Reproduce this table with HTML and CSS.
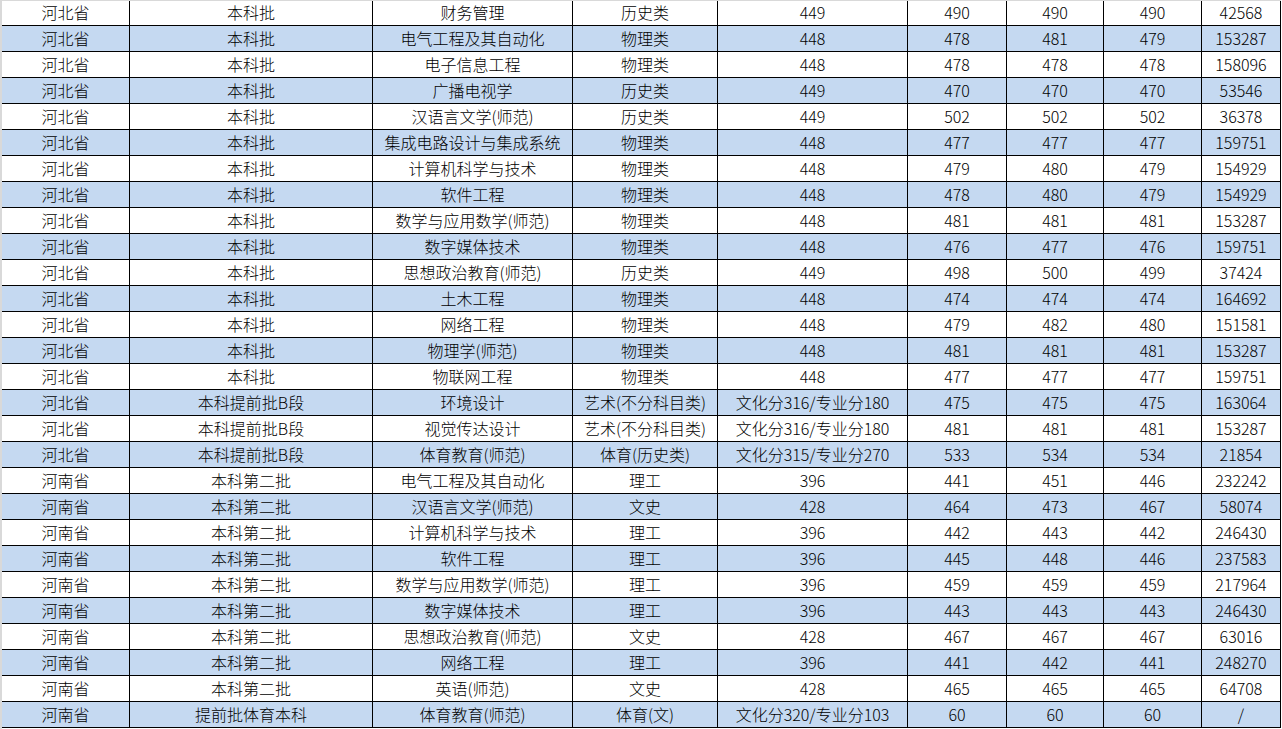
FILE: index.html
```html
<!DOCTYPE html>
<html lang="zh-CN">
<head>
<meta charset="utf-8">
<title>录取分数</title>
<link rel="stylesheet" href="styles.css">
</head>
<body>
<div class="sheet">
<div class="row first"><div class="c">河北省</div><div class="c">本科批</div><div class="c">财务管理</div><div class="c">历史类</div><div class="c">449</div><div class="c">490</div><div class="c">490</div><div class="c">490</div><div class="c">42568</div></div>
<div class="row alt"><div class="c">河北省</div><div class="c">本科批</div><div class="c">电气工程及其自动化</div><div class="c">物理类</div><div class="c">448</div><div class="c">478</div><div class="c">481</div><div class="c">479</div><div class="c">153287</div></div>
<div class="row"><div class="c">河北省</div><div class="c">本科批</div><div class="c">电子信息工程</div><div class="c">物理类</div><div class="c">448</div><div class="c">478</div><div class="c">478</div><div class="c">478</div><div class="c">158096</div></div>
<div class="row alt"><div class="c">河北省</div><div class="c">本科批</div><div class="c">广播电视学</div><div class="c">历史类</div><div class="c">449</div><div class="c">470</div><div class="c">470</div><div class="c">470</div><div class="c">53546</div></div>
<div class="row"><div class="c">河北省</div><div class="c">本科批</div><div class="c">汉语言文学(师范)</div><div class="c">历史类</div><div class="c">449</div><div class="c">502</div><div class="c">502</div><div class="c">502</div><div class="c">36378</div></div>
<div class="row alt"><div class="c">河北省</div><div class="c">本科批</div><div class="c">集成电路设计与集成系统</div><div class="c">物理类</div><div class="c">448</div><div class="c">477</div><div class="c">477</div><div class="c">477</div><div class="c">159751</div></div>
<div class="row"><div class="c">河北省</div><div class="c">本科批</div><div class="c">计算机科学与技术</div><div class="c">物理类</div><div class="c">448</div><div class="c">479</div><div class="c">480</div><div class="c">479</div><div class="c">154929</div></div>
<div class="row alt"><div class="c">河北省</div><div class="c">本科批</div><div class="c">软件工程</div><div class="c">物理类</div><div class="c">448</div><div class="c">478</div><div class="c">480</div><div class="c">479</div><div class="c">154929</div></div>
<div class="row"><div class="c">河北省</div><div class="c">本科批</div><div class="c">数学与应用数学(师范)</div><div class="c">物理类</div><div class="c">448</div><div class="c">481</div><div class="c">481</div><div class="c">481</div><div class="c">153287</div></div>
<div class="row alt"><div class="c">河北省</div><div class="c">本科批</div><div class="c">数字媒体技术</div><div class="c">物理类</div><div class="c">448</div><div class="c">476</div><div class="c">477</div><div class="c">476</div><div class="c">159751</div></div>
<div class="row"><div class="c">河北省</div><div class="c">本科批</div><div class="c">思想政治教育(师范)</div><div class="c">历史类</div><div class="c">449</div><div class="c">498</div><div class="c">500</div><div class="c">499</div><div class="c">37424</div></div>
<div class="row alt"><div class="c">河北省</div><div class="c">本科批</div><div class="c">土木工程</div><div class="c">物理类</div><div class="c">448</div><div class="c">474</div><div class="c">474</div><div class="c">474</div><div class="c">164692</div></div>
<div class="row"><div class="c">河北省</div><div class="c">本科批</div><div class="c">网络工程</div><div class="c">物理类</div><div class="c">448</div><div class="c">479</div><div class="c">482</div><div class="c">480</div><div class="c">151581</div></div>
<div class="row alt"><div class="c">河北省</div><div class="c">本科批</div><div class="c">物理学(师范)</div><div class="c">物理类</div><div class="c">448</div><div class="c">481</div><div class="c">481</div><div class="c">481</div><div class="c">153287</div></div>
<div class="row"><div class="c">河北省</div><div class="c">本科批</div><div class="c">物联网工程</div><div class="c">物理类</div><div class="c">448</div><div class="c">477</div><div class="c">477</div><div class="c">477</div><div class="c">159751</div></div>
<div class="row alt"><div class="c">河北省</div><div class="c">本科提前批B段</div><div class="c">环境设计</div><div class="c">艺术(不分科目类)</div><div class="c">文化分316/专业分180</div><div class="c">475</div><div class="c">475</div><div class="c">475</div><div class="c">163064</div></div>
<div class="row"><div class="c">河北省</div><div class="c">本科提前批B段</div><div class="c">视觉传达设计</div><div class="c">艺术(不分科目类)</div><div class="c">文化分316/专业分180</div><div class="c">481</div><div class="c">481</div><div class="c">481</div><div class="c">153287</div></div>
<div class="row alt"><div class="c">河北省</div><div class="c">本科提前批B段</div><div class="c">体育教育(师范)</div><div class="c">体育(历史类)</div><div class="c">文化分315/专业分270</div><div class="c">533</div><div class="c">534</div><div class="c">534</div><div class="c">21854</div></div>
<div class="row"><div class="c">河南省</div><div class="c">本科第二批</div><div class="c">电气工程及其自动化</div><div class="c">理工</div><div class="c">396</div><div class="c">441</div><div class="c">451</div><div class="c">446</div><div class="c">232242</div></div>
<div class="row alt"><div class="c">河南省</div><div class="c">本科第二批</div><div class="c">汉语言文学(师范)</div><div class="c">文史</div><div class="c">428</div><div class="c">464</div><div class="c">473</div><div class="c">467</div><div class="c">58074</div></div>
<div class="row"><div class="c">河南省</div><div class="c">本科第二批</div><div class="c">计算机科学与技术</div><div class="c">理工</div><div class="c">396</div><div class="c">442</div><div class="c">443</div><div class="c">442</div><div class="c">246430</div></div>
<div class="row alt"><div class="c">河南省</div><div class="c">本科第二批</div><div class="c">软件工程</div><div class="c">理工</div><div class="c">396</div><div class="c">445</div><div class="c">448</div><div class="c">446</div><div class="c">237583</div></div>
<div class="row"><div class="c">河南省</div><div class="c">本科第二批</div><div class="c">数学与应用数学(师范)</div><div class="c">理工</div><div class="c">396</div><div class="c">459</div><div class="c">459</div><div class="c">459</div><div class="c">217964</div></div>
<div class="row alt"><div class="c">河南省</div><div class="c">本科第二批</div><div class="c">数字媒体技术</div><div class="c">理工</div><div class="c">396</div><div class="c">443</div><div class="c">443</div><div class="c">443</div><div class="c">246430</div></div>
<div class="row"><div class="c">河南省</div><div class="c">本科第二批</div><div class="c">思想政治教育(师范)</div><div class="c">文史</div><div class="c">428</div><div class="c">467</div><div class="c">467</div><div class="c">467</div><div class="c">63016</div></div>
<div class="row alt"><div class="c">河南省</div><div class="c">本科第二批</div><div class="c">网络工程</div><div class="c">理工</div><div class="c">396</div><div class="c">441</div><div class="c">442</div><div class="c">441</div><div class="c">248270</div></div>
<div class="row"><div class="c">河南省</div><div class="c">本科第二批</div><div class="c">英语(师范)</div><div class="c">文史</div><div class="c">428</div><div class="c">465</div><div class="c">465</div><div class="c">465</div><div class="c">64708</div></div>
<div class="row alt"><div class="c">河南省</div><div class="c">提前批体育本科</div><div class="c">体育教育(师范)</div><div class="c">体育(文)</div><div class="c">文化分320/专业分103</div><div class="c">60</div><div class="c">60</div><div class="c">60</div><div class="c">/</div></div>
</div>
</body>
</html>
```

FILE: styles.css
```css
html, body {
  margin: 0;
  padding: 0;
  background: #ffffff;
}

body {
  font-family: "Noto Sans CJK SC", "Noto Sans", sans-serif;
  font-size: 16px;
  font-weight: 300;
  color: #000000;
}

.sheet {
  width: 1279px;
  height: 728px;
  overflow: hidden;
  border-top: 1px solid #d9d9d9;
  border-left: 2px solid #d9d9d9;
}

.row {
  display: grid;
  grid-template-columns: 128px 243px 200px 145px 190px 99px 97px 98px 79px;
  height: 26px;
  box-sizing: border-box;
  border-bottom: 1px solid #000000;
  background: #ffffff;
}

.row.first {
  margin-top: -1px;
}

.row.alt {
  background: #c5d9f1;
}

.c {
  box-sizing: border-box;
  border-right: 1px solid #000000;
  text-align: center;
  line-height: 25px;
  white-space: nowrap;
  overflow: hidden;
}
```
